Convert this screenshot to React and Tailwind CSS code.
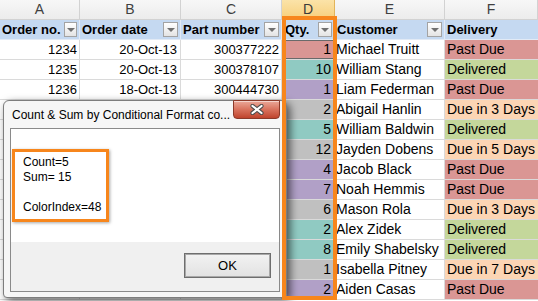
import React from "react";

const PINK = "bg-[#da9694]";
const GREEN = "bg-[#c4d79b]";
const PEACH = "bg-[#fcd5b4]";
const TEAL = "bg-[#90cac2]";
const PURPLE = "bg-[#b1a0c7]";
const GRAY = "bg-[#c0c0c0]";

const rows = [
  ["1234", "20-Oct-13", "300377222", "1", PINK, "Michael Truitt", "Past Due", PINK],
  ["1235", "20-Oct-13", "300378107", "10", TEAL, "William Stang", "Delivered", GREEN],
  ["1236", "18-Oct-13", "300444730", "1", PURPLE, "Liam Federman", "Past Due", PINK],
  ["", "", "", "2", GRAY, "Abigail Hanlin", "Due in 3 Days", PEACH],
  ["", "", "", "5", TEAL, "William Baldwin", "Delivered", GREEN],
  ["", "", "", "12", GRAY, "Jayden Dobens", "Due in 5 Days", PEACH],
  ["", "", "", "4", PURPLE, "Jacob Black", "Past Due", PINK],
  ["", "", "", "7", PURPLE, "Noah Hemmis", "Past Due", PINK],
  ["", "", "", "6", GRAY, "Mason Rola", "Due in 3 Days", PEACH],
  ["", "", "", "2", TEAL, "Alex Zidek", "Delivered", GREEN],
  ["", "", "", "8", TEAL, "Emily Shabelsky", "Delivered", GREEN],
  ["", "", "", "1", GRAY, "Isabella Pitney", "Due in 7 Days", PEACH],
  ["", "", "", "2", PURPLE, "Aiden Casas", "Past Due", PINK],
];

function Filter({ w = "w-[15px]" }) {
  return (
    <span className={`ml-auto mr-[2px] shrink-0 ${w} h-[15px] border border-[#a3a3a3] bg-gradient-to-b from-white to-[#e4e4e4] flex items-center justify-center`}>
      <span className="w-0 h-0 border-l-[4px] border-r-[4px] border-t-[4px] border-l-transparent border-r-transparent border-t-[#707070]" />
    </span>
  );
}

const cellBase = "h-[20px] border-r border-b border-[#dadada] flex items-center overflow-hidden whitespace-nowrap text-black";

export default function App() {
  return (
    <div className="relative w-[538px] h-[301px] overflow-hidden bg-white font-['Liberation_Sans',Arial,sans-serif]">
      <div className="grid grid-cols-[80px_101px_101px_53px_110px_93px]">
        {["A", "B", "C", "D", "E", "F"].map((l) => (
          <div
            key={l}
            className={`h-[20px] border-r border-b flex items-center justify-center text-[14px] ${
              l === "D"
                ? "bg-gradient-to-b from-[#fbe3a8] to-[#f7cf7a] border-[#e2b45a] text-[#3a3a3a]"
                : "bg-gradient-to-b from-[#f7f7f7] to-[#ececec] border-[#d2d2d2] text-[#3f3f3f]"
            }`}
          >
            {l}
          </div>
        ))}
        <div className="h-[20px] border-r border-b border-[#e2eaf5] bg-[#c5d9f1] flex items-center pl-[2px] text-[13px] font-bold">
          <span className="overflow-hidden whitespace-nowrap">Order no.</span>
          <Filter w="w-[13px]" />
        </div>
        <div className="h-[20px] border-r border-b border-[#e2eaf5] bg-[#c5d9f1] flex items-center pl-[2px] text-[13px] font-bold">
          <span className="whitespace-nowrap">Order date</span>
          <Filter />
        </div>
        <div className="h-[20px] border-r border-b border-[#e2eaf5] bg-[#c5d9f1] flex items-center pl-[2px] text-[13px] font-bold">
          <span className="whitespace-nowrap">Part number</span>
          <Filter />
        </div>
        <div className="h-[20px] border-r border-b border-[#e2eaf5] bg-[#c5d9f1] flex items-center pl-[3px] text-[13px] font-bold">
          <span className="whitespace-nowrap">Qty.</span>
          <Filter w="w-[14px]" />
        </div>
        <div className="h-[20px] border-r border-b border-[#e2eaf5] bg-[#c5d9f1] flex items-center pl-[2px] text-[13px] font-bold">
          <span className="whitespace-nowrap">Customer</span>
          <Filter />
        </div>
        <div className="h-[20px] border-b border-[#e2eaf5] bg-[#c5d9f1] flex items-center pl-[2px] text-[13px] font-bold">
          <span className="whitespace-nowrap">Delivery</span>
        </div>
        {rows.map((r, i) => (
          <React.Fragment key={i}>
            <div className={`${cellBase} justify-end pr-[2px] text-[13px]`}>{r[0]}</div>
            <div className={`${cellBase} justify-end pr-[3px] text-[13px]`}>{r[1]}</div>
            <div className={`${cellBase} justify-end pr-[2px] text-[13px]`}>{r[2]}</div>
            <div
              className={`${cellBase} justify-end pr-[3px] text-[14px] ${r[4]} ${
                i === 0 ? "shadow-[inset_0_0_0_1px_#6a6a6a]" : ""
              }`}
            >
              {r[3]}
            </div>
            <div className={`${cellBase} pl-[1px] text-[14px]`}>{r[5]}</div>
            <div className={`${cellBase} border-r-0 pl-[2px] text-[14px] ${r[7]}`}>{r[6]}</div>
          </React.Fragment>
        ))}
      </div>

      <div className="absolute left-[3px] top-[100px] w-[284px] h-[198px] rounded-t-[6px] rounded-b-[4px] border border-[#7d7d7d] bg-[#f6f6f6] shadow-[3px_3px_8px_rgba(0,0,0,0.6)] flex flex-col">
        <div className="flex h-[27px] pl-[8px] pr-[6px]">
          <span className="flex-1 self-center text-[12px] text-black whitespace-nowrap">
            Count &amp; Sum by Conditional Format co...
          </span>
          <span className="-mt-[1px] w-[47px] h-[19px] rounded-b-[4px] border border-[#8b3a2a] bg-gradient-to-b from-[#eaa899] via-[#d8725d] to-[#bf432c] flex items-center justify-center shadow-[inset_0_1px_0_rgba(255,255,255,0.5)]">
            <svg width="14" height="11" viewBox="0 0 14 11">
              <path d="M2.5 2 L11.5 9 M11.5 2 L2.5 9" stroke="#4d4d4d" strokeWidth="4.2" strokeLinecap="round" />
              <path d="M2.5 2 L11.5 9 M11.5 2 L2.5 9" stroke="#ffffff" strokeWidth="2.2" strokeLinecap="round" />
            </svg>
          </span>
        </div>
        <div className="ml-[6px] mr-[6px] h-[164px] border border-[#8a8a8a] flex flex-col">
          <div className="h-[113px] bg-white pt-[20px] pl-[1px]">
            <div className="w-[97px] h-[73px] border-[3px] border-[#f7861c] pl-[8px] pt-[3px] text-[12px] leading-[15px] text-black shadow-[1px_1px_3px_rgba(0,0,0,0.35)]">
              <div>Count=5</div>
              <div>Sum= 15</div>
              <div>&nbsp;</div>
              <div>ColorIndex=48</div>
            </div>
          </div>
          <div className="flex-1 bg-[#f0f0f0] flex justify-end items-start pt-[11px] pr-[8px]">
            <div className="w-[87px] h-[25px] border border-[#6e6e6e] shadow-[inset_0_0_0_1px_#a8a8a8] bg-gradient-to-b from-[#f2f2f2] to-[#e2e2e2] flex items-center justify-center text-[13px] text-black">
              OK
            </div>
          </div>
        </div>
      </div>

      <div className="absolute left-[282px] top-[16px] w-[55px] h-[284px] border-[4px] border-[#f7861c]" />
    </div>
  );
}
